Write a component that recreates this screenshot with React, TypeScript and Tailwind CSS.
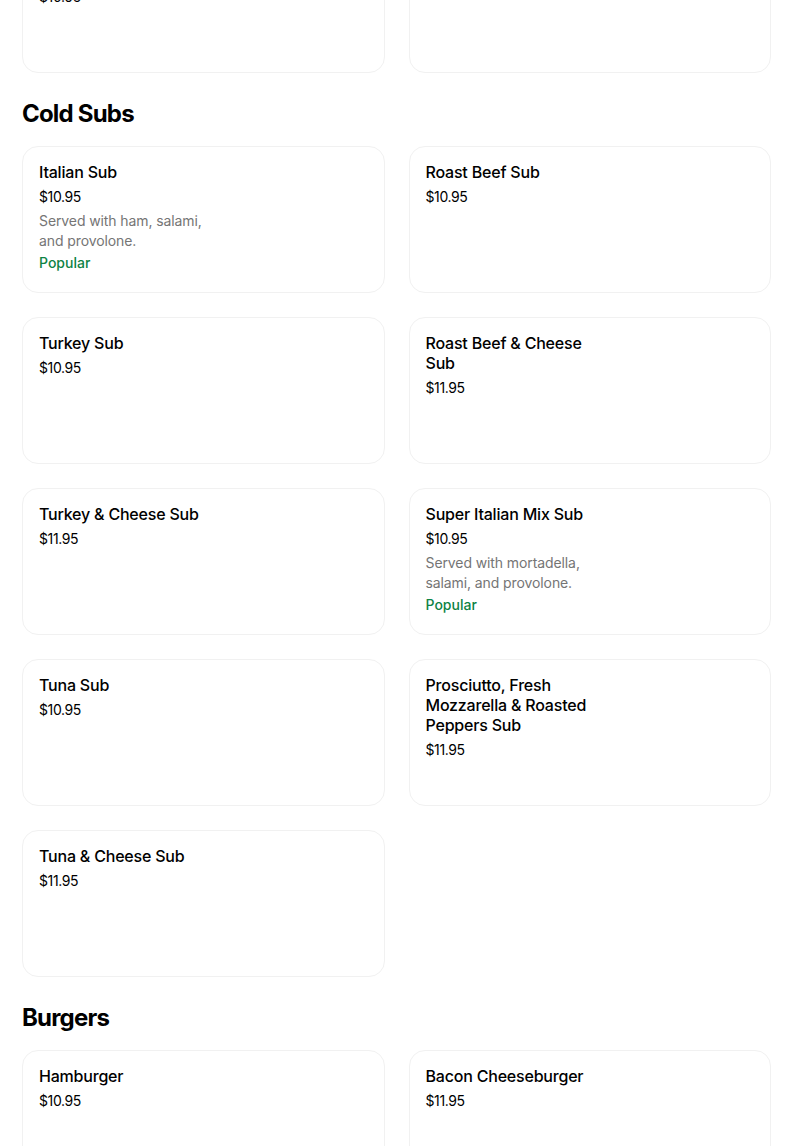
type Item = {
  name: string;
  price: string;
  description?: string;
  popular?: boolean;
};

const hotSubsTail: Item[] = [
  { name: "Chicken Cutlet Parmigiana Sub", price: "$10.95" },
  { name: "Meatball Sub", price: "$10.95" },
];

const coldSubs: Item[] = [
  {
    name: "Italian Sub",
    price: "$10.95",
    description: "Served with ham, salami, and provolone.",
    popular: true,
  },
  { name: "Roast Beef Sub", price: "$10.95" },
  { name: "Turkey Sub", price: "$10.95" },
  { name: "Roast Beef & Cheese Sub", price: "$11.95" },
  { name: "Turkey & Cheese Sub", price: "$11.95" },
  {
    name: "Super Italian Mix Sub",
    price: "$10.95",
    description: "Served with mortadella, salami, and provolone.",
    popular: true,
  },
  { name: "Tuna Sub", price: "$10.95" },
  { name: "Prosciutto, Fresh Mozzarella & Roasted Peppers Sub", price: "$11.95" },
  { name: "Tuna & Cheese Sub", price: "$11.95" },
];

const burgers: Item[] = [
  { name: "Hamburger", price: "$10.95" },
  { name: "Bacon Cheeseburger", price: "$11.95" },
];

function ItemCard({ item }: { item: Item }) {
  return (
    <div className="h-[147px] rounded-2xl border border-[#f1f1f1] bg-white px-4 pt-[15px]">
      <div className="flex max-w-[172px] flex-col">
        <span className="text-[16px] font-medium leading-5 tracking-[-0.2px] text-black">
          {item.name}
        </span>
        <span className="mt-[5px] text-[14px] leading-5 tracking-[-0.4px] text-black">
          {item.price}
        </span>
        {item.description && (
          <span className="mt-1 text-[14px] leading-5 tracking-[-0.1px] text-[#757575]">
            {item.description}
          </span>
        )}
        {item.popular && (
          <span className="mt-0.5 text-[14px] font-medium leading-5 text-[#0e8345]">
            Popular
          </span>
        )}
      </div>
    </div>
  );
}

function Section({ title, items }: { title?: string; items: Item[] }) {
  return (
    <section className="flex flex-col">
      {title && (
        <h2 className="mb-4 mt-[25px] text-[24px] font-bold leading-8 tracking-[-0.8px] text-black">
          {title}
        </h2>
      )}
      <div className="grid grid-cols-2 gap-6">
        {items.map((item) => (
          <ItemCard key={item.name} item={item} />
        ))}
      </div>
    </section>
  );
}

export default function App() {
  return (
    <div
      className="min-h-[1146px] overflow-hidden bg-white"
      style={{ fontFamily: "Inter, 'Noto Sans', sans-serif" }}
    >
      <div className="-mt-[74px] w-[749px] pl-[22px] box-content">
        <Section items={hotSubsTail} />
        <Section title="Cold Subs" items={coldSubs} />
        <Section title="Burgers" items={burgers} />
      </div>
    </div>
  );
}
